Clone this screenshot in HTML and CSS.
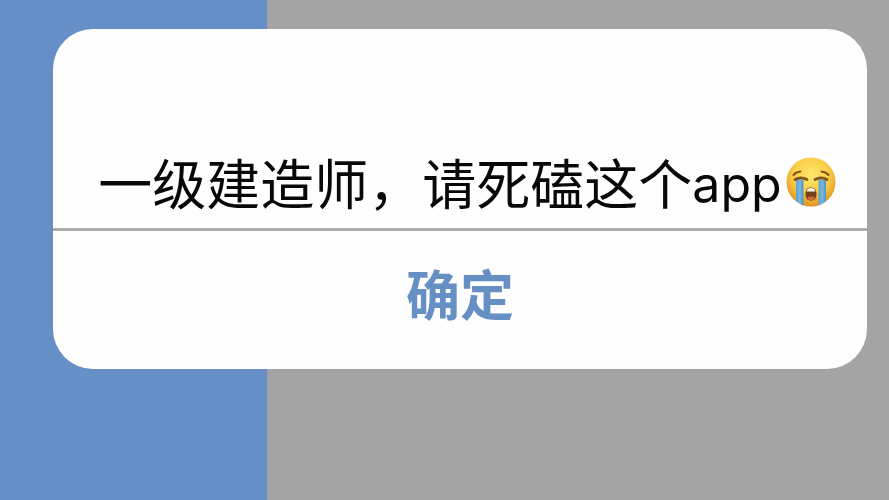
FILE: index.html
```html
<!DOCTYPE html>
<html lang="zh-CN">
<head>
<meta charset="utf-8">
<meta name="viewport" content="width=device-width, initial-scale=1">
<title>提示</title>
<link rel="stylesheet" href="styles.css">
</head>
<body>
<main class="backdrop">
  <section class="dialog" role="alertdialog" aria-labelledby="message">
    <p class="message" id="message"><span>一级建造师，请死磕这个<span class="latin">app</span></span><svg class="emoji" viewBox="0 0 50 50" role="img" aria-label="大哭">
      <defs>
        <radialGradient id="face" cx="50%" cy="36%" r="64%">
          <stop offset="0" stop-color="#ffe76b"/>
          <stop offset=".55" stop-color="#fbcf48"/>
          <stop offset="1" stop-color="#e0921f"/>
        </radialGradient>
        <linearGradient id="tear" x1="0" x2="1" y1="0" y2="0">
          <stop offset="0" stop-color="#5a9fce"/>
          <stop offset=".5" stop-color="#78b8e0"/>
          <stop offset="1" stop-color="#4b92c8"/>
        </linearGradient>
        <clipPath id="head"><circle cx="25" cy="25" r="24.5"/></clipPath>
      </defs>
      <circle cx="25" cy="25" r="24.5" fill="url(#face)"/>
      <g clip-path="url(#head)" fill="url(#tear)">
        <path d="M10 23h7.500v27h-7.500z"/>
        <path d="M32.500 23h7.500v27h-7.500z"/>
      </g>
      <g fill="none" stroke="#80561f" stroke-linecap="round">
        <path d="M9 22.500Q15 19.500 21 22.500M29 22.500Q35 19.500 41 22.500" stroke-width="2.800"/>
        <path d="M7.500 18Q10 15 14.500 14.500M35.500 14.500Q40 15 42.500 18" stroke-width="2"/>
      </g>
      <path d="M19.500 37c0-4.500 2-6.500 5.500-6.500s5.500 2 5.500 6.500-2 6.500-5.500 6.500-5.500-2-5.500-6.500z" fill="#74401e"/>
      <path d="M20.500 34.500c.7-2.800 2-3.500 4.500-3.500s3.800.7 4.500 3.500z" fill="#fff5df"/>
      <path d="M21 40.500c2-1.500 6-1.500 8 0-1 2-2.200 2.500-4 2.500s-3-.5-4-2.500z" fill="#d9683c"/>
    </svg></p>
    <button class="confirm" type="button">确定</button>
  </section>
</main>
</body>
</html>
```
FILE: styles.css
```css
* {
  box-sizing: border-box;
}

body {
  margin: 0;
  font-family: "Noto Sans CJK SC", sans-serif;
}

.backdrop {
  min-height: 100vh;
  padding: 29px 22px 29px 53px;
  background: linear-gradient(to right, #668fc7 30%, #a4a4a4 30%);
}

.dialog {
  overflow: hidden;
  border-radius: 40px;
  background: #fefefe;
}

.message {
  display: flex;
  align-items: center;
  justify-content: center;
  gap: 4px;
  margin: 0;
  padding: 113px 0 6px 14px;
  border-bottom: 3px solid #acacac;
  color: #080808;
  font-size: 54px;
  line-height: 80px;
  white-space: nowrap;
}

.latin {
  font-family: Inter, sans-serif;
  font-size: 50px;
  line-height: 1;
  vertical-align: 3px;
}

.emoji {
  flex: none;
  width: 50px;
  height: 50px;
}

.confirm {
  display: block;
  width: 100%;
  padding: 22px 0 36px;
  border: 0;
  background: none;
  color: #668fc4;
  font: bold 54px/80px "Noto Sans CJK SC", sans-serif;
  cursor: pointer;
}
```
